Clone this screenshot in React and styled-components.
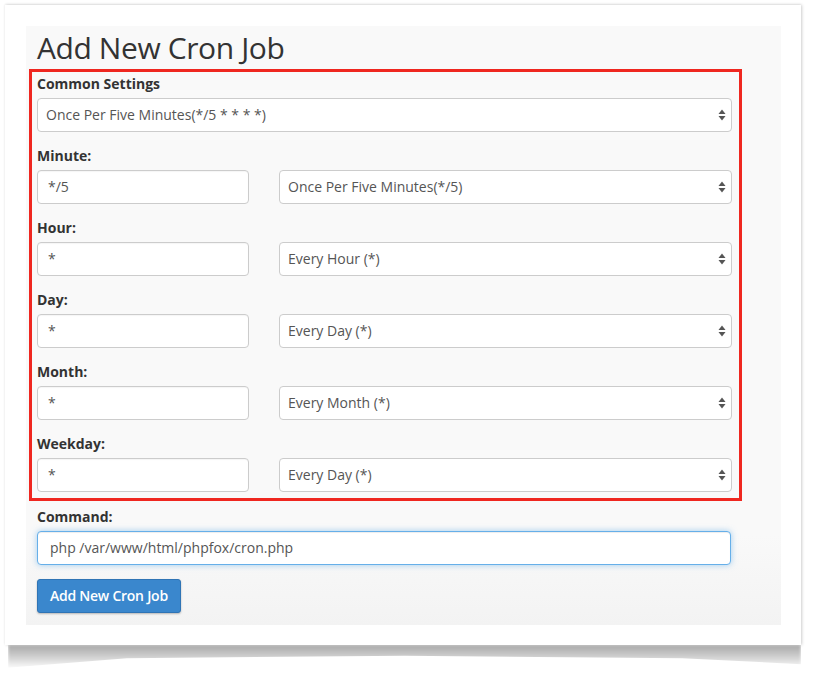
import React from 'react';
import styled, { createGlobalStyle } from 'styled-components';

const GlobalStyle = createGlobalStyle`
  html, body {
    margin: 0;
    padding: 0;
    background: #ffffff;
  }
  body {
    font-family: "Open Sans", "Liberation Sans", Arial, sans-serif;
    color: #333333;
  }
`;

const Page = styled.div`
  width: 815px;
  height: 674px;
  padding-top: 5px;
  padding-left: 5px;
  box-sizing: border-box;
`;

const Frame = styled.div`
  position: relative;
  width: 796px;
  height: 640px;
  box-sizing: border-box;
  padding: 21px 20px 20px 21px;
  background: #ffffff;
  box-shadow: 1px 0 3px rgba(0, 0, 0, 0.18), 0 -1px 2px rgba(0, 0, 0, 0.06);

  /* curled page shadow under the frame */
  &::after {
    content: '';
    position: absolute;
    left: 3px;
    right: 0;
    top: 100%;
    height: 24px;
    background:
      linear-gradient(to bottom, rgba(0, 0, 0, 0.34) 0%, rgba(0, 0, 0, 0.2) 45%, rgba(0, 0, 0, 0) 100%);
    clip-path: polygon(0 0, 100% 0, 100% 80%, 85% 55%, 50% 45%, 15% 55%, 0 95%);
    filter: blur(1.5px);
  }
`;

const Panel = styled.div`
  height: 100%;
  box-sizing: border-box;
  padding: 0 0 13px 3px;
  background: linear-gradient(to bottom, #f9f9f9 0%, #f9f9f9 85%, #f3f3f3 100%);
`;

const Column = styled.div`
  width: 713px;
`;

const Title = styled.h1`
  margin: 0;
  padding: 2px 0 1px 8px;
  font-size: 30px;
  line-height: 40px;
  font-weight: 400;
  color: #333333;
  letter-spacing: -0.4px;
`;

const Highlight = styled.div`
  border: 3px solid #ef2720;
  padding: 2px 7px 6px 5px;
`;

const Group = styled.div`
  margin-top: ${(p) => (p.$first ? '0' : '14px')};
`;

const Label = styled.div`
  font-size: 14px;
  line-height: 20px;
  font-weight: 700;
  color: #333333;
  margin-bottom: 4px;
`;

const Row = styled.div`
  display: grid;
  grid-template-columns: 212px 1fr;
  column-gap: 30px;
`;

const TextInput = styled.input`
  width: 100%;
  height: 34px;
  box-sizing: border-box;
  border: 1px solid ${(p) => (p.$focused ? '#66afe9' : '#cccccc')};
  border-radius: 4px;
  padding: 0 12px 1px ${(p) => (p.$focused ? '12px' : '10px')};
  font-family: "Open Sans", "Liberation Sans", Arial, sans-serif;
  font-size: 14px;
  color: #555555;
  background: #ffffff;
  outline: none;
  box-shadow: ${(p) => (p.$focused
    ? 'inset 0 1px 1px rgba(0,0,0,.075), 0 0 6px rgba(102,175,233,.6)'
    : 'inset 0 1px 1px rgba(0,0,0,.04)')};
`;

const SelectWrap = styled.div`
  position: relative;
`;

const Select = styled.select`
  width: 100%;
  height: 34px;
  box-sizing: border-box;
  appearance: none;
  -webkit-appearance: none;
  border: 1px solid #cccccc;
  border-radius: 4px;
  padding: 0 24px 2px 8px;
  font-family: "Open Sans", "Liberation Sans", Arial, sans-serif;
  font-size: 14px;
  color: #555555;
  background: #ffffff;
  outline: none;
`;

const Arrows = styled.svg`
  position: absolute;
  right: 6px;
  top: 11px;
  pointer-events: none;
`;

const Command = styled.div`
  padding: 6px 11px 0 8px;
`;

const Button = styled.button`
  margin-top: 14px;
  height: 34px;
  padding: 0 12px 1px;
  border: 1px solid #2f74b5;
  border-radius: 3px;
  background: #3a87cd;
  color: #ffffff;
  font-family: "Open Sans", "Liberation Sans", Arial, sans-serif;
  font-size: 14px;
  font-weight: 600;
  letter-spacing: -0.25px;
  box-shadow: 0 1px 2px rgba(0, 0, 0, 0.25);
  cursor: pointer;
`;

function SelectBox({ value }) {
  return (
    <SelectWrap>
      <Select defaultValue={value}>
        <option>{value}</option>
      </Select>
      <Arrows width="8" height="12" viewBox="0 0 8 12">
        <path d="M4 0.5 L7.5 5 H0.5 Z" fill="#555" />
        <path d="M4 11.5 L7.5 7 H0.5 Z" fill="#555" />
      </Arrows>
    </SelectWrap>
  );
}

const fields = [
  { label: 'Minute:', value: '*/5', choice: 'Once Per Five Minutes(*/5)' },
  { label: 'Hour:', value: '*', choice: 'Every Hour (*)' },
  { label: 'Day:', value: '*', choice: 'Every Day (*)' },
  { label: 'Month:', value: '*', choice: 'Every Month (*)' },
  { label: 'Weekday:', value: '*', choice: 'Every Day (*)' },
];

export default function App() {
  return (
    <Page>
      <GlobalStyle />
      <Frame>
        <Panel>
          <Column>
            <Title>Add New Cron Job</Title>
            <Highlight>
              <Group $first>
                <Label>Common Settings</Label>
                <SelectBox value="Once Per Five Minutes(*/5 * * * *)" />
              </Group>
              {fields.map((f) => (
                <Group key={f.label}>
                  <Label>{f.label}</Label>
                  <Row>
                    <TextInput defaultValue={f.value} />
                    <SelectBox value={f.choice} />
                  </Row>
                </Group>
              ))}
            </Highlight>
            <Command>
              <Label>Command:</Label>
              <TextInput $focused defaultValue="php /var/www/html/phpfox/cron.php" />
              <Button type="button">Add New Cron Job</Button>
            </Command>
          </Column>
        </Panel>
      </Frame>
    </Page>
  );
}
